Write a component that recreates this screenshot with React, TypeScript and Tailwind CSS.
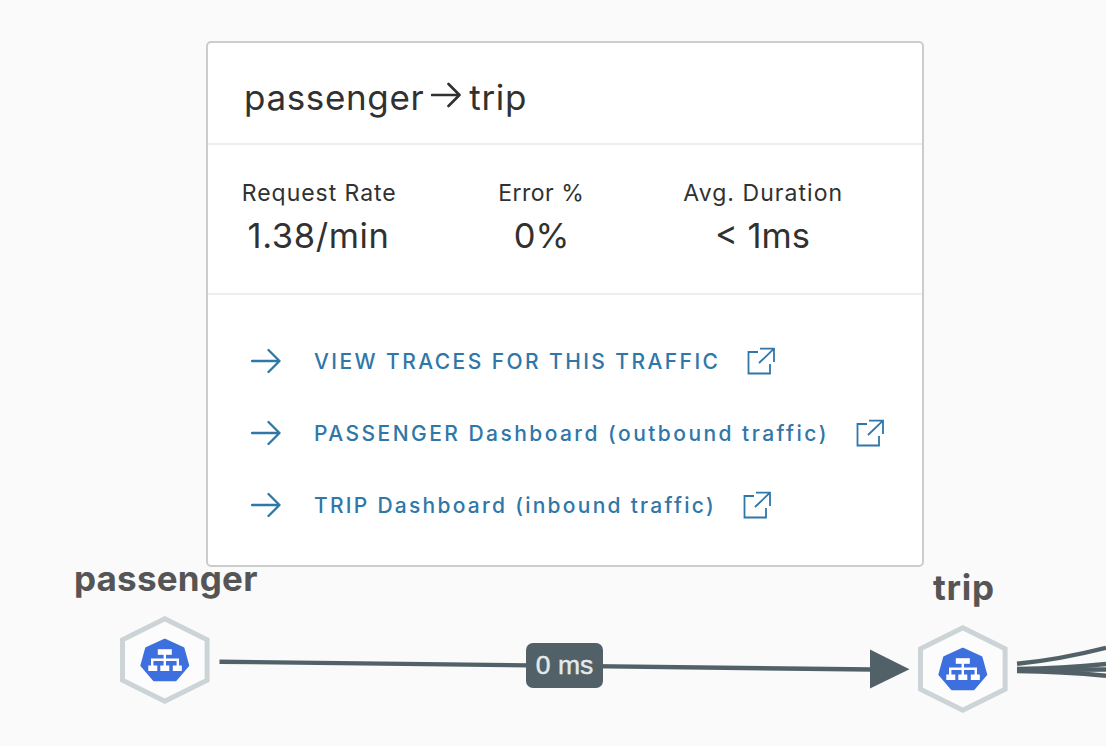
import React from "react";

function ArrowIcon({ className }: { className: string }) {
  return (
    <svg className={className} viewBox="0 0 30 26" fill="none" stroke="currentColor" strokeLinecap="round" strokeLinejoin="round">
      <path d="M1 13H28.5M17.5 2L28.5 13L17.5 24" />
    </svg>
  );
}

function PopOutIcon() {
  return (
    <svg className="h-7 w-7 shrink-0" viewBox="0 0 28 28" fill="none" stroke="currentColor" strokeWidth="1.8">
      <path d="M11 5H1.5V26.5H23V17" />
      <path d="M13 1.7H27V15M27 1.7L12 16" />
    </svg>
  );
}

function Stat({ label, value, labelClass, valueClass }: { label: string; value: string; labelClass: string; valueClass: string }) {
  return (
    <div className="flex flex-col items-center whitespace-nowrap">
      <span className={`text-[23px] leading-8 ${labelClass}`}>{label}</span>
      <span className={`mt-[5px] text-[34.5px] leading-[44px] ${valueClass}`}>{value}</span>
    </div>
  );
}

function TrafficLink({ label, className }: { label: string; className: string }) {
  return (
    <a className="flex h-[72px] items-center whitespace-nowrap text-[#2f77a8]">
      <ArrowIcon className="h-[26px] w-[30px] shrink-0 stroke-[2.3px]" />
      <span className={`ml-[33px] mr-[27px] pt-0.5 text-[21px] font-medium ${className}`}>{label}</span>
      <PopOutIcon />
    </a>
  );
}

function ServiceNode({ x, y }: { x: number; y: number }) {
  return (
    <g transform={`translate(${x} ${y})`}>
      <path d="M0 -41.3L42.3 -20.3V20.3L0 41.3L-42.3 20.3V-20.3Z" fill="#fcfcfc" stroke="#ccd4d7" strokeWidth="5" />
      <path d="M0 -20L18.5 -11.5L23.2 5.5L10.8 20H-10.8L-23.2 5.5L-18.5 -11.5Z" fill="#3d70de" stroke="#3d70de" strokeWidth="2.5" strokeLinejoin="round" />
      <g fill="#fff">
        <path d="M-7 -10.8H7V-5.2H-7Z" />
        <path d="M-16.5 5.6H-7.5V11H-16.5ZM-4.5 5.6H4.5V11H-4.5ZM8 5.6H17V11H8Z" />
      </g>
      <path d="M-12.6 6V-0.3H13V6M0 -6V6" fill="none" stroke="#fff" strokeWidth="2.4" />
    </g>
  );
}

export default function App() {
  return (
    <main className="relative h-[746px] w-[1106px] overflow-hidden bg-[#fafafa] font-['Inter',sans-serif] text-[#313131]">
      <svg className="absolute inset-0" width="1106" height="746" viewBox="0 0 1106 746">
        <g fill="none" stroke="#526168" strokeWidth="4.4">
          <path d="M219.5 661.7L872 669.5" />
          <path d="M1017 663.8Q1060 659.5 1106 647.8" />
          <path d="M1017 669Q1062 668.5 1106 664" />
          <path d="M1017 670L1106 669.5" />
          <path d="M1017 671Q1062 671.5 1106 675.7" />
        </g>
        <path d="M870 649.5L909.5 669.3L870 688.5Z" fill="#526168" />
        <ServiceNode x={164.8} y={660} />
        <ServiceNode x={962.8} y={669} />
      </svg>

      <span className="absolute left-[74px] top-[556px] whitespace-nowrap text-[35px] font-[650] leading-[44px] tracking-[0.2px] text-[#555]">passenger</span>
      <span className="absolute left-[933px] top-[565px] whitespace-nowrap text-[35px] font-[650] leading-[44px] tracking-[0.7px] text-[#555]">trip</span>
      <span className="absolute left-[526px] top-[643px] flex h-[45px] w-[77px] items-center justify-center whitespace-nowrap rounded-[7px] bg-[#526168] font-['Liberation_Sans',sans-serif] text-[26.5px] text-[#e4ebee] [-webkit-text-stroke:0.4px_#e4ebee]">0 ms</span>

      <section className="absolute left-[206px] top-[41px] flex h-[526px] w-[718px] flex-col rounded-[5px] border-2 border-[#ccc] bg-white">
        <h1 className="flex h-[102px] items-center border-b-2 border-[#eee] pl-9 pt-2 text-[35px] leading-[44px]">
          <span className="tracking-[0.65px]">passenger</span>
          <ArrowIcon className="mb-[5px] ml-[7px] mr-2 h-[26px] w-[30px] stroke-[2.6px]" />
          <span className="tracking-[0.65px]">trip</span>
        </h1>
        <div className="flex h-[150px] border-b-2 border-[#eee] pt-8">
          <div className="ml-[33px] w-[155px]"><Stat label="Request Rate" value="1.38/min" labelClass="pl-[1.5px] tracking-[0.95px]" valueClass="tracking-[0.6px]" /></div>
          <div className="ml-[103px] w-[83px]"><Stat label="Error %" value="0%" labelClass="pl-[1.5px] tracking-[0.5px]" valueClass="pl-0.5" /></div>
          <div className="ml-[101px] w-[159px]"><Stat label="Avg. Duration" value="< 1ms" labelClass="pl-[1.5px] tracking-[1.05px]" valueClass="" /></div>
        </div>
        <nav className="flex flex-col pl-[43px] pt-[30px]">
          <TrafficLink label="VIEW TRACES FOR THIS TRAFFIC" className="tracking-[2.42px]" />
          <TrafficLink label="PASSENGER Dashboard (outbound traffic)" className="tracking-[2.45px]" />
          <TrafficLink label="TRIP Dashboard (inbound traffic)" className="tracking-[2.26px]" />
        </nav>
      </section>
    </main>
  );
}
